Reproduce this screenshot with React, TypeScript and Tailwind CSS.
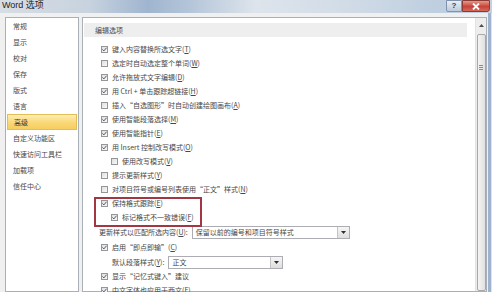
import React from 'react';

type Row =
  | { kind: 'check'; text: string; acc?: string; checked: boolean; indent?: boolean }
  | { kind: 'select'; label: string; acc: string; value: string; width: string; indent?: boolean; h: string };

const navItems = ['常规', '显示', '校对', '保存', '版式', '语言', '高级', '自定义功能区', '快速访问工具栏', '加载项', '信任中心'];

const topRows: Row[] = [
  { kind: 'check', text: '键入内容替换所选文字', acc: 'T', checked: true },
  { kind: 'check', text: '选定时自动选定整个单词', acc: 'W', checked: false },
  { kind: 'check', text: '允许拖放式文字编辑', acc: 'D', checked: true },
  { kind: 'check', text: '用 Ctrl + 单击跟踪超链接', acc: 'H', checked: true },
  { kind: 'check', text: '插入“自选图形”时自动创建绘图画布', acc: 'A', checked: false },
  { kind: 'check', text: '使用智能段落选择', acc: 'M', checked: true },
  { kind: 'check', text: '使用智能指针', acc: 'E', checked: true },
  { kind: 'check', text: '用 Insert 控制改写模式', acc: 'O', checked: true },
  { kind: 'check', text: '使用改写模式', acc: 'V', checked: false, indent: true },
  { kind: 'check', text: '提示更新样式', acc: 'Y', checked: false },
  { kind: 'check', text: '对项目符号或编号列表使用“正文”样式', acc: 'N', checked: false },
];

const boxedRows: Row[] = [
  { kind: 'check', text: '保持格式跟踪', acc: 'E', checked: true },
  { kind: 'check', text: '标记格式不一致错误', acc: 'F', checked: true, indent: true },
];

const bottomRows: Row[] = [
  { kind: 'select', label: '更新样式以匹配所选内容', acc: 'U', value: '保留以前的编号和项目符号样式', width: 'w-[158px]', h: 'h-[16px]' },
  { kind: 'check', text: '启用“即点即输”', acc: 'C', checked: true },
  { kind: 'select', label: '默认段落样式', acc: 'Y', value: '正文', width: 'w-[115px]', indent: true, h: 'h-[15px]' },
  { kind: 'check', text: '显示“记忆式键入”建议', checked: true },
  { kind: 'check', text: '中文字体也应用于西文', acc: 'F', checked: true },
];

function Box({ checked }: { checked: boolean }) {
  return (
    <span className="w-[7px] h-[7px] shrink-0 border border-[#969696] bg-[linear-gradient(135deg,#dedfe0,#f9f9f9)] flex items-center justify-center">
      {checked && (
        <svg width="5" height="5" viewBox="0 0 5 5">
          <path d="M0.4 2.4 L1.9 3.9 L4.6 0.7" stroke="#505a6a" strokeWidth="1" fill="none" />
        </svg>
      )}
    </span>
  );
}

function Acc({ acc, colon }: { acc?: string; colon?: boolean }) {
  if (!acc) return null;
  return (
    <>
      (<span className="underline underline-offset-1">{acc}</span>){colon ? ':' : ''}
    </>
  );
}

function RowView({ row }: { row: Row }) {
  if (row.kind === 'check') {
    return (
      <div className={`h-[14px] flex items-center gap-[4px] ${row.indent ? 'pl-[27px]' : 'pl-[17px]'}`}>
        <Box checked={row.checked} />
        <span className="whitespace-nowrap">
          {row.text}
          <Acc acc={row.acc} />
        </span>
      </div>
    );
  }
  return (
    <div className={`${row.h} flex items-center gap-[4px] ${row.indent ? 'pl-[28px]' : 'pl-[15px]'}`}>
      <span className="whitespace-nowrap">
        {row.label}
        <Acc acc={row.acc} colon />
      </span>
      <div className={`${row.width} h-[13px] border border-[#abadb3] bg-white flex items-center`}>
        <span className="flex-1 pl-[3px] whitespace-nowrap">{row.value}</span>
        <span className="w-[12px] h-full border-l border-[#c5c5c5] bg-[linear-gradient(#f6f6f6,#dedede)] flex items-center justify-center">
          <svg width="5" height="3" viewBox="0 0 5 3">
            <path d="M0 0 L5 0 L2.5 3 Z" fill="#2e2e2e" />
          </svg>
        </span>
      </div>
    </div>
  );
}

export default function App() {
  return (
    <div className="w-[492px] h-[292px] overflow-hidden flex flex-col bg-[#d3dde8] text-[7px] leading-none text-[#474747] font-['Noto_Sans_CJK_SC',sans-serif]">
      {/* title bar */}
      <div className="h-[13px] shrink-0 flex items-start bg-[linear-gradient(90deg,#d7dde4_0%,#c8d3df_18%,#9fb5cf_30%,#b3c4d8_38%,#dde4ec_52%,#d2dce7_70%,#bfcfe0_88%,#c3d1e1_100%)]">
        <span className="pl-[2px] pt-[1px] text-[9px] text-[#1e1e1e] font-['Liberation_Sans','Noto_Sans_CJK_SC',sans-serif]">Word 选项</span>
        <div className="ml-auto flex pr-[2px]">
          <div className="w-[16px] h-[12px] border border-[#7f93ad] rounded-bl-[2px] bg-[linear-gradient(#e9eef4,#bccadb)] flex items-center justify-center text-[8px] text-[#2f3f56] font-bold font-['Liberation_Sans',sans-serif]">?</div>
          <div className="w-[28px] h-[12px] border border-[#8a3b34] rounded-br-[3px] bg-[linear-gradient(#e59a8c,#c7443a_55%,#d7685a)] flex items-center justify-center">
            <svg width="8" height="7" viewBox="0 0 8 7">
              <path d="M1 0.5 L7 6.5 M7 0.5 L1 6.5" stroke="#ffffff" strokeWidth="1.8" />
            </svg>
          </div>
        </div>
      </div>

      {/* body */}
      <div className="flex-1 min-h-0 flex">
        <div className="flex-1 min-h-0 flex gap-[3px] bg-[#f0f0f0] pt-[4px] pl-[5px]">
          {/* nav */}
          <div className="w-[74px] shrink-0 bg-white border border-[#a9b0b8] px-[1px]">
            {navItems.map((n) => (
              <div
                key={n}
                className={`h-[16px] flex items-center pl-[6px] ${
                  n === '高级'
                    ? 'border border-[#e2bd58] bg-[linear-gradient(#fdeeb3,#fad97a_50%,#f6cd5f)] pl-[5px] text-[#3a3a3a]'
                    : ''
                }`}
              >
                {n}
              </div>
            ))}
          </div>

          {/* content */}
          <div className="flex-1 min-w-0 bg-white border border-[#a9b0b8] flex">
            <div className="flex-1 min-w-0 pl-[1px] pr-[8px]">
              <div className="mt-[5px] h-[14px] bg-[#eeeeee] flex items-center pl-[11px] text-[#4a4a4a]">编辑选项</div>
              <div className="mt-[5.5px]">
                {topRows.map((r, i) => (
                  <RowView key={i} row={r} />
                ))}
                <div className="relative">
                  {boxedRows.map((r, i) => (
                    <RowView key={i} row={r} />
                  ))}
                  <div className="absolute left-[10px] top-[0.5px] w-[108px] h-[30px] border-2 border-[#a23643]" />
                </div>
                {bottomRows.map((r, i) => (
                  <RowView key={i} row={r} />
                ))}
              </div>
            </div>

            {/* scrollbar */}
            <div className="w-[11px] shrink-0 bg-[#ededed] border-l border-[#e2e2e2] flex flex-col items-center pt-[1px]">
              <div className="w-[10px] h-[13px] flex items-center justify-center">
                <svg width="5" height="3" viewBox="0 0 5 3">
                  <path d="M0 3 L5 3 L2.5 0 Z" fill="#4d4d4d" />
                </svg>
              </div>
              <div className="mt-[2px] w-[9px] flex-1 border border-[#a8a8a8] rounded-[2px] bg-[linear-gradient(90deg,#f4f4f4,#e0e0e0)] flex flex-col items-center pt-[30px]">
                <div className="w-[4px] flex flex-col gap-[1px]">
                  <span className="h-px bg-[#8a8a8a]" />
                  <span className="h-px bg-[#8a8a8a]" />
                  <span className="h-px bg-[#8a8a8a]" />
                </div>
              </div>
            </div>
          </div>
        </div>
        {/* right frame */}
        <div className="w-[1px] bg-[#f0f0f0]" />
        <div className="w-[3px] bg-[#9fb3cf]" />
        <div className="w-[1px] bg-[#dbe3ec]" />
      </div>
    </div>
  );
}
